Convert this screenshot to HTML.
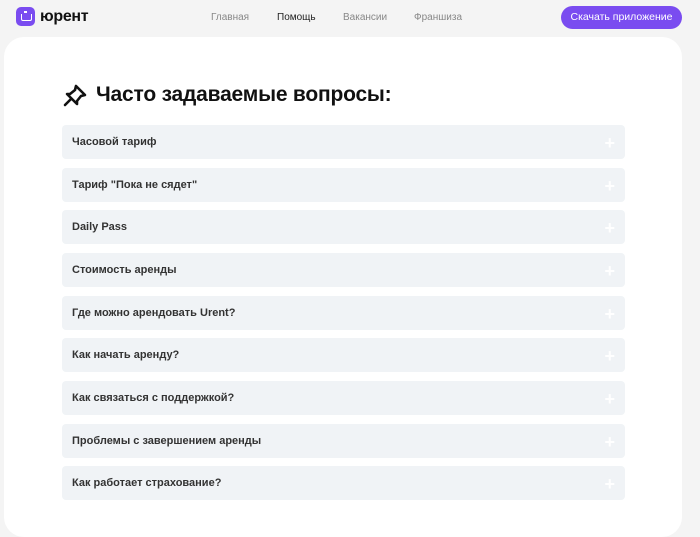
<!DOCTYPE html>
<html><head><meta charset="utf-8"><style>
*{margin:0;padding:0;box-sizing:border-box}
body{width:700px;height:514px;overflow:hidden;background:#f4f4f4;font-family:"Liberation Sans",Arial,sans-serif;position:relative}
.logo{position:absolute;left:16px;top:7px;width:19px;height:19px;border-radius:5px;background:#7a4cf0}
.logo:after{content:"";position:absolute;left:5px;top:7px;width:9px;height:6px;border:1.6px solid #fff;border-top:none;border-radius:0 0 2px 2px}
.logo:before{content:"";position:absolute;left:8px;top:4px;width:3px;height:1.6px;background:#fff}
.brand{position:absolute;left:40px;top:8px;font-size:16px;font-weight:bold;color:#111;letter-spacing:-0.3px}
.nav{position:absolute;top:12px;font-size:10px;color:#888}
.btn{position:absolute;left:561px;top:6px;width:121px;height:23px;border-radius:12px;background:#7a4cf0;color:#fff;font-size:10.5px;text-align:center;line-height:23px}
.card{position:absolute;left:4px;top:37px;width:678px;height:500px;background:#fff;border-radius:20px}
h1{position:absolute;left:96px;top:83px;font-size:21px;font-weight:bold;color:#111;letter-spacing:-0.2px}
.pin{position:absolute;left:62px;top:83px}
.item{position:absolute;left:62px;width:563px;height:34px;background:#f0f3f6;border-radius:4px;font-size:11px;font-weight:bold;color:#333;line-height:34px;padding-left:10px}
.item:after{content:"+";position:absolute;right:10px;top:1px;color:#fff;font-size:18px;font-weight:bold}
</style></head><body>
<div class="logo"></div><div class="brand">юрент</div>
<div class="nav" style="left:211px">Главная</div>
<div class="nav" style="left:277px;color:#222">Помощь</div>
<div class="nav" style="left:343px">Вакансии</div>
<div class="nav" style="left:414px">Франшиза</div>
<div class="btn">Скачать приложение</div>
<div class="card"></div>
<svg class="pin" width="26" height="26" viewBox="0 0 26 26" fill="none" stroke="#111" stroke-width="2.6" stroke-linejoin="round" stroke-linecap="round"><path d="M14 3 L23 12 L19 13 L15 18 L15 21 L5 11 L8 11 L13 7 Z"/><path d="M9 16 L3 22"/></svg>
<h1>Часто задаваемые вопросы:</h1>
<div class="item" style="top:125px">Часовой тариф</div>
<div class="item" style="top:168px">Тариф "Пока не сядет"</div>
<div class="item" style="top:210px">Daily Pass</div>
<div class="item" style="top:253px">Стоимость аренды</div>
<div class="item" style="top:296px">Где можно арендовать Urent?</div>
<div class="item" style="top:338px">Как начать аренду?</div>
<div class="item" style="top:381px">Как связаться с поддержкой?</div>
<div class="item" style="top:424px">Проблемы с завершением аренды</div>
<div class="item" style="top:466px">Как работает страхование?</div>
</body></html>
